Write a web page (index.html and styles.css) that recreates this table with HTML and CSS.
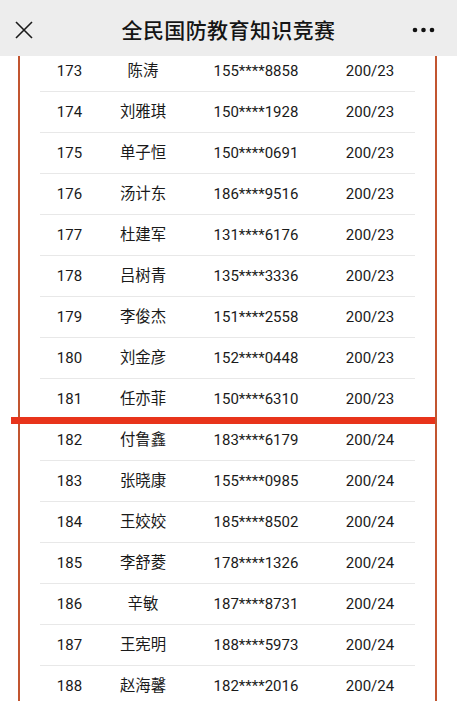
FILE: index.html
```html
<!DOCTYPE html>
<html lang="zh">
<head>
<meta charset="utf-8">
<title>全民国防教育知识竞赛</title>
<link rel="stylesheet" href="styles.css">
</head>
<body>
<header class="topbar">
  <svg class="close" width="18" height="18" viewBox="0 0 18 18"><path d="M1 1 L17 17 M17 1 L1 17" stroke="#1a1a1a" stroke-width="1.6" fill="none"/></svg>
  <h1 class="title">全民国防教育知识竞赛</h1>
  <svg class="more" width="24" height="6" viewBox="0 0 24 6"><circle cx="3" cy="3" r="2.3" fill="#111"/><circle cx="11.5" cy="3" r="2.3" fill="#111"/><circle cx="20" cy="3" r="2.3" fill="#111"/></svg>
</header>
<main class="frame">
  <div class="list">
    <div class="row"><span>173</span><span class="name">陈涛</span><span>155****8858</span><span>200/23</span></div>
    <div class="row"><span>174</span><span class="name">刘雅琪</span><span>150****1928</span><span>200/23</span></div>
    <div class="row"><span>175</span><span class="name">单子恒</span><span>150****0691</span><span>200/23</span></div>
    <div class="row"><span>176</span><span class="name">汤计东</span><span>186****9516</span><span>200/23</span></div>
    <div class="row"><span>177</span><span class="name">杜建军</span><span>131****6176</span><span>200/23</span></div>
    <div class="row"><span>178</span><span class="name">吕树青</span><span>135****3336</span><span>200/23</span></div>
    <div class="row"><span>179</span><span class="name">李俊杰</span><span>151****2558</span><span>200/23</span></div>
    <div class="row"><span>180</span><span class="name">刘金彦</span><span>152****0448</span><span>200/23</span></div>
    <div class="row"><span>181</span><span class="name">任亦菲</span><span>150****6310</span><span>200/23</span></div>
    <div class="cutline"></div>
    <div class="row"><span>182</span><span class="name">付鲁鑫</span><span>183****6179</span><span>200/24</span></div>
    <div class="row"><span>183</span><span class="name">张晓康</span><span>155****0985</span><span>200/24</span></div>
    <div class="row"><span>184</span><span class="name">王姣姣</span><span>185****8502</span><span>200/24</span></div>
    <div class="row"><span>185</span><span class="name">李舒菱</span><span>178****1326</span><span>200/24</span></div>
    <div class="row"><span>186</span><span class="name">辛敏</span><span>187****8731</span><span>200/24</span></div>
    <div class="row"><span>187</span><span class="name">王宪明</span><span>188****5973</span><span>200/24</span></div>
    <div class="row"><span>188</span><span class="name">赵海馨</span><span>182****2016</span><span>200/24</span></div>
  </div>
</main>
</body>
</html>
```

FILE: styles.css
```css
html, body {
  margin: 0;
  padding: 0;
  background: #ffffff;
}
body {
  width: 457px;
  height: 706px;
  overflow: hidden;
  font-family: Roboto, "Noto Sans CJK SC", sans-serif;
  color: #1a1a1a;
}
.topbar {
  position: relative;
  z-index: 2;
  height: 56px;
  background: #ededed;
  display: flex;
  align-items: center;
  justify-content: space-between;
  padding: 0 21px 0 15px;
  box-sizing: border-box;
}
.close {
  display: block;
  margin-top: 3px;
}
.more {
  display: block;
  margin-top: 4px;
}
.title {
  margin: 0;
  font-family: "Noto Sans CJK SC", sans-serif;
  font-size: 21px;
  font-weight: 500;
  color: #151515;
  letter-spacing: 0.4px;
  position: absolute;
  left: 0;
  right: 0;
  text-align: center;
  top: 14px;
  line-height: 30px;
}
.frame {
  margin: 0 20px 0 18px;
  border-left: 2px solid #c25530;
  border-right: 2px solid #c25530;
  height: 650px;
  position: relative;
}
.list {
  margin-top: -5px;
  padding: 0 20px;
  clip-path: inset(5px -40px 0 -40px);
}
.row {
  display: grid;
  grid-template-columns: 59px 88px 138px 90px;
  height: 41px;
  box-sizing: border-box;
  border-bottom: 1px solid #e8e8e8;
  align-items: center;
  text-align: center;
  font-size: 15px;
  line-height: 20px;
}
.row .name {
  font-size: 15.4px;
}
.cutline {
  height: 7px;
  margin: -3px -20px -4px -29px;
  background: #e8341b;
  position: relative;
  z-index: 1;
}
```
